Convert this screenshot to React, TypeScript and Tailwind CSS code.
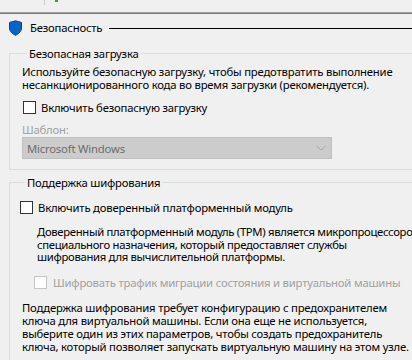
import React from 'react';

const Check = ({ disabled = false }: { disabled?: boolean }) => (
    <span
        className={
            'inline-block w-[13px] h-[13px] shrink-0 border bg-white ' +
            (disabled ? 'border-[#c6c6c6]' : 'border-[#333333]')
        }
    />
);

const Shield = () => (
    <svg width="15" height="16" viewBox="0 0 15 16">
        <path
            d="M1.5 2.5 L7.5 0.8 L13.5 2.5 L13.5 8 C13.5 11.5 10.5 14 7.5 15.3 C4.5 14 1.5 11.5 1.5 8 Z"
            fill="#0a64c8"
            stroke="#0b3f86"
            strokeWidth="1"
        />
    </svg>
);

export default function App() {
    return (
        <div
            className="w-[412px] h-[360px] overflow-hidden bg-[#f0f0f0] text-[11.3px] tracking-[-0.2px] leading-[13px] text-black whitespace-nowrap"
            style={{ fontFamily: '"Noto Sans", "Liberation Sans", sans-serif' }}
        >
            {/* toolbar remnants */}
            <div className="relative h-[12px]">
                <span className="absolute left-[44px] top-0 w-px h-[5px] bg-[#c8c8c8]" />
                <span className="absolute left-[55px] top-0 w-[3px] h-[2px] bg-[#3aa040]" />
            </div>
            <div className="h-px bg-[#a0a0a0]" />
            <div className="h-px bg-[#7a7a7a]" />

            {/* section header */}
            <div className="flex items-center h-[26px] pl-[8px] pt-[1px]">
                <Shield />
                <span className="ml-[7px]">Безопасность</span>
                <div className="flex-1 h-px bg-black ml-[7px] mt-[1px]" />
            </div>

            {/* secure boot */}
            <fieldset className="ml-[9px] w-[420px] mt-[6px] border border-[#dcdcdc] pl-[12px] pb-[10px]">
                <legend className="ml-[5px] px-[2px] leading-[15px]">Безопасная загрузка</legend>
                <p className="mt-[4px]">
                    Используйте безопасную загрузку, чтобы предотвратить выполнение
                    <br />
                    несанкционированного кода во время загрузки (рекомендуется).
                </p>
                <label className="flex items-center gap-[5px] mt-[10px] ml-[1px]">
                    <Check />
                    <span>Включить безопасную загрузку</span>
                </label>
                <div className="mt-[9px] text-[#a0a0a0]">Шаблон:</div>
                <div className="mt-[1px] w-[310px] h-[22px] bg-[#cccccc] border border-[#bfbfbf] flex items-center justify-between pl-[4px] pr-[4px] text-[#6d6d6d]">
                    <span>Microsoft Windows</span>
                    <svg width="12" height="8" viewBox="0 0 12 8">
                        <path d="M1.5 2 L6 6 L10.5 2" fill="none" stroke="#a8a8a8" strokeWidth="1" />
                    </svg>
                </div>
            </fieldset>

            {/* encryption */}
            <fieldset className="ml-[9px] w-[420px] mt-[5px] border border-[#dcdcdc] pl-[10px] pb-[20px]">
                <legend className="ml-[5px] px-[2px] leading-[15px]">Поддержка шифрования</legend>
                <label className="flex items-center gap-[5px] mt-[11px]">
                    <Check />
                    <span>Включить доверенный платформенный модуль</span>
                </label>
                <p className="mt-[12px] ml-[17px] leading-[12.5px] tracking-[-0.32px]">
                    Доверенный платформенный модуль (TPM) является микропроцессором
                    <br />
                    специального назначения, который предоставляет службы
                    <br />
                    шифрования для вычислительной платформы.
                </p>
                <label className="flex items-center gap-[6px] mt-[12px] ml-[14px] text-[#a0a0a0]">
                    <Check disabled />
                    <span>Шифровать трафик миграции состояния и виртуальной машины</span>
                </label>
                <p className="mt-[12px] ml-[2px]">
                    Поддержка шифрования требует конфигурацию с предохранителем
                    <br />
                    ключа для виртуальной машины. Если она еще не используется,
                    <br />
                    выберите один из этих параметров, чтобы создать предохранитель
                    <br />
                    ключа, который позволяет запускать виртуальную машину на этом узле.
                </p>
            </fieldset>
        </div>
    );
}
